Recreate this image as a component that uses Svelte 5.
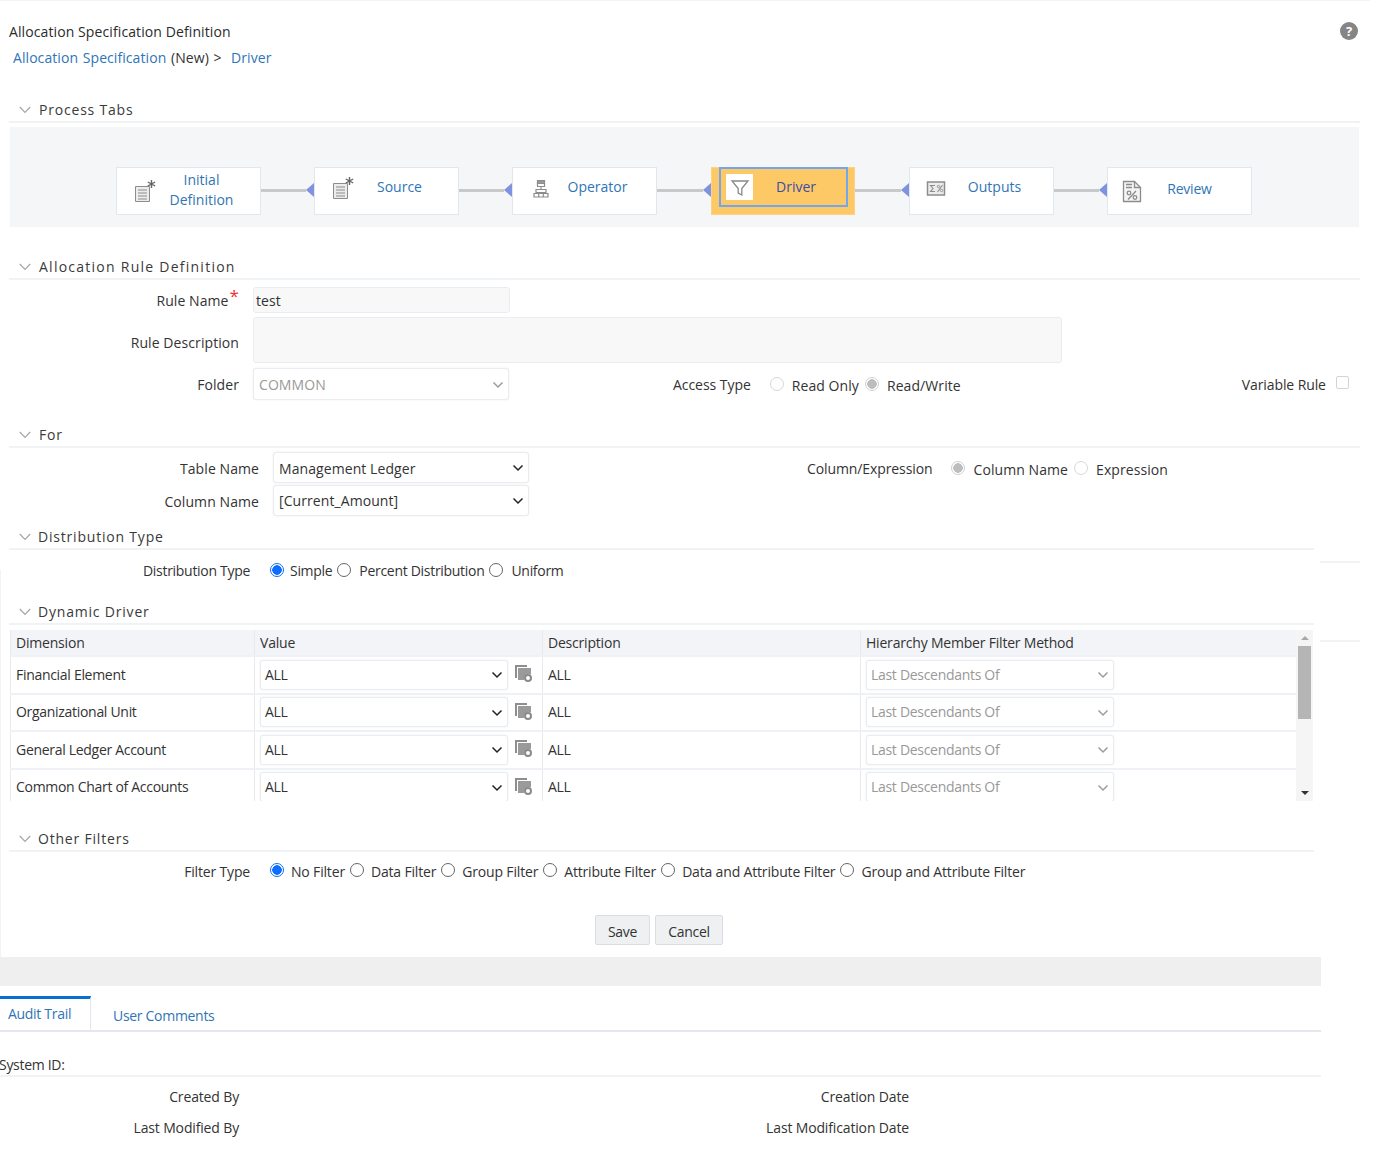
<script>
    const steps = [
        {name: 'Initial Definition', icon: 'doc', low: true},
        {name: 'Source', icon: 'doc'},
        {name: 'Operator', icon: 'org'},
        {name: 'Driver', icon: 'funnel', active: true},
        {name: 'Outputs', icon: 'sigma'},
        {name: 'Review', icon: 'pct'}
    ];
    const dims = ['Financial Element', 'Organizational Unit', 'General Ledger Account', 'Common Chart of Accounts'];
    const filters = ['No Filter', 'Data Filter', 'Group Filter', 'Attribute Filter', 'Data and Attribute Filter', 'Group and Attribute Filter'];
</script>

{#snippet chev(cls)}
    <svg class="chev {cls}" viewBox="0 0 12 8" width="12" height="8"><path d="M1.5 1.5 6 6l4.5-4.5" fill="none" stroke="currentColor" stroke-width="1.5"/></svg>
{/snippet}

{#snippet head(text, cls = '')}
    <div class="sec-head {cls}">
        <svg viewBox="0 0 12 8" width="12" height="8"><path d="M.8 1 6 6.5 11.2 1" fill="none" stroke="#a6a6a6" stroke-width="1.2"/></svg>
        <span>{text}</span>
    </div>
{/snippet}

{#snippet stepIcon(kind)}
    {#if kind === 'doc'}
        <svg viewBox="0 0 24 24" width="24" height="24" fill="none" stroke="#8c8c8c">
            <path d="M2.500 7.500h14v15h-14z" fill="#ececec"/>
            <path d="M5 11h9M5 14h9M5 17h9M5 20h9" stroke-width="1.200"/>
            <path d="M18.500 1v8M14.800 3l7.400 4M14.800 7l7.400-4" stroke="#666" stroke-width="1.400"/>
        </svg>
    {:else if kind === 'org'}
        <svg viewBox="0 0 24 24" width="24" height="24" fill="none" stroke="#8c8c8c" stroke-width="1.200">
            <path d="M8.500 4.500h7v3h-7z" fill="#999"/>
            <path d="M8.500 7.500h7v3h-7z"/>
            <path d="M12 10.500v3M7 13.500h10v3H7z"/>
            <path d="M5 17.500h4.700v3.500H5zM9.700 17.500h4.600v3.500H9.700zM14.300 17.500H19v3.500h-4.700z"/>
        </svg>
    {:else if kind === 'funnel'}
        <svg viewBox="0 0 24 24" width="24" height="24" fill="none" stroke="#888" stroke-width="1.300">
            <path d="M4 6h16l-6.200 7.500V20l-3.600-1.800v-4.700z"/>
        </svg>
    {:else if kind === 'sigma'}
        <svg viewBox="0 0 24 24" width="24" height="24" fill="none" stroke="#8c8c8c">
            <rect x="3.500" y="6" width="17" height="13" fill="#ececec" stroke-width="1.500"/>
            <path d="M11 9.500H6.500l2.500 3-2.500 3H11" stroke-width="1.100"/>
            <path d="M18.500 9 13.500 16" stroke-width="1.100"/>
            <circle cx="14.500" cy="10.500" r="1.200" stroke-width=".9"/>
            <circle cx="17.500" cy="14.500" r="1.200" stroke-width=".9"/>
        </svg>
    {:else}
        <svg viewBox="0 0 24 24" width="24" height="24" fill="none" stroke="#8c8c8c" stroke-width="1.300">
            <path d="M3.500 2.500h11l6 6v14h-17z" fill="#f4f4f4"/>
            <path d="M14.500 2.500v6h6"/>
            <path d="M6 5.500h6M6 8.500h6" stroke-width="1.500"/>
            <path d="M16 12 8 20.500"/>
            <circle cx="9" cy="14" r="1.800"/>
            <circle cx="15" cy="18.500" r="1.800"/>
        </svg>
    {/if}
{/snippet}

<div class="page">
    <div class="topline"></div>

    <div class="title-row">
        <span>Allocation Specification Definition</span>
        <span class="help">?</span>
    </div>
    <div class="crumb"><span class="link">Allocation Specification</span> (New) &gt;&nbsp; <span class="link">Driver</span></div>

    {@render head('Process Tabs', 'h-process')}
    <div class="band">
        {#each steps as s, i}
            {#if i > 0}
                <div class="conn" class:wide={s.active || steps[i - 1].active}><span class="conn-line"></span><span class="conn-arrow"></span></div>
            {/if}
            <div class="step {s.icon}" class:active={s.active} class:low={s.low}>
                <span class="step-inner">
                    <span class="step-icon">{@render stepIcon(s.icon)}</span>
                    <span class="step-label">{s.name}</span>
                </span>
            </div>
        {/each}
    </div>

    {@render head('Allocation Rule Definition', 'h-rule')}
    <div class="row pad r-name">
        <span class="lbl">Rule Name<sup>*</sup></span>
        <div class="input name">test</div>
    </div>
    <div class="row pad r-desc">
        <span class="lbl">Rule Description</span>
        <div class="input desc"></div>
    </div>
    <div class="row pad r-folder">
        <span class="lbl">Folder</span>
        <div class="sel off folder"><span>COMMON</span>{@render chev('light')}</div>
        <span class="access">Access Type</span>
        <label class="opt first"><input type="radio" class="dis" disabled name="acc"/>Read Only</label>
        <label class="opt roomy"><input type="radio" class="dis" checked disabled name="acc"/>Read/Write</label>
        <span class="var">Variable Rule</span>
        <input type="checkbox" class="cb" disabled/>
    </div>

    {@render head('For', 'h-for')}
    <div class="row pad r-table">
        <span class="lbl wide">Table Name</span>
        <div class="sel tbl"><span>Management Ledger</span>{@render chev('')}</div>
        <span class="colexp">Column/Expression</span>
        <label class="opt first"><input type="radio" class="dis" checked disabled name="ce"/>Column Name</label>
        <label class="opt roomy"><input type="radio" class="dis" disabled name="ce"/>Expression</label>
    </div>
    <div class="row pad r-col">
        <span class="lbl wide">Column Name</span>
        <div class="sel tbl"><span>[Current_Amount]</span>{@render chev('')}</div>
    </div>

    {@render head('Distribution Type', 'short h-dist')}
    <div class="row r-dist">
        <span class="lbl dist-lbl">Distribution Type</span>
        <label class="opt first"><input type="radio" name="dist" checked/>Simple</label>
        <label class="opt"><input type="radio" name="dist"/>Percent Distribution</label>
        <label class="opt"><input type="radio" name="dist"/>Uniform</label>
        <span class="stub dist-stub"></span>
    </div>

    {@render head('Dynamic Driver', 'short h-dyn')}
    <div class="grid-wrap">
        <div class="grid">
            <table>
                <colgroup><col class="c1"/><col class="c2"/><col class="c3"/><col class="c4"/></colgroup>
                <thead>
                    <tr><th>Dimension</th><th>Value</th><th>Description</th><th>Hierarchy Member Filter Method</th></tr>
                </thead>
                <tbody>
                    {#each dims as d}
                        <tr>
                            <td>{d}</td>
                            <td>
                                <div class="val">
                                    <div class="sel cell"><span>ALL</span>{@render chev('')}</div>
                                    <svg class="stack" viewBox="0 0 18 18" width="18" height="18">
                                        <path d="M1 1h12v2H3v11H1z" fill="#8e8e8e"/>
                                        <path d="M4 4h13v6.500a5 5 0 0 0-7 5.500H4z" fill="#9a9a9a"/>
                                        <circle cx="14" cy="14" r="3" fill="none" stroke="#8a8a8a" stroke-width="2"/>
                                    </svg>
                                </div>
                            </td>
                            <td>ALL</td>
                            <td><div class="sel off cell"><span>Last Descendants Of</span>{@render chev('light')}</div></td>
                        </tr>
                    {/each}
                </tbody>
            </table>
        </div>
        <div class="scroll">
            <span class="arr up"></span>
            <span class="thumb"></span>
            <span class="arr down"></span>
        </div>
        <span class="stub grid-stub"></span>
    </div>

    {@render head('Other Filters', 'short h-other')}
    <div class="row r-filter">
        <span class="lbl dist-lbl">Filter Type</span>
        {#each filters as f, i}
            <label class="opt" class:first={i === 0}><input type="radio" name="flt" checked={i === 0}/>{f}</label>
        {/each}
    </div>

    <div class="buttons">
        <button class="save">Save</button>
        <button class="cancel">Cancel</button>
    </div>

    <div class="graybar"></div>

    <div class="tabs">
        <span class="tab on">Audit Trail</span>
        <span class="tab">User Comments</span>
    </div>

    <div class="sysid">System ID:</div>
    <div class="audit a1"><span class="alb">Created By</span><span class="alb right">Creation Date</span></div>
    <div class="audit a2"><span class="alb">Last Modified By</span><span class="alb right">Last Modification Date</span></div>
</div>

<style>
    :global(body) {
        margin: 0;
        background: #fff;
    }

    .page {
        width: 1387px;
        height: 1150px;
        overflow: hidden;
        font-family: "Open Sans", "Noto Sans", sans-serif;
        font-size: 14px;
        letter-spacing: -0.3px;
        color: #333;
        line-height: 24px;
        background: linear-gradient(#f3f3f3, #f3f3f3) 0 570px / 1px 387px no-repeat;
    }

    .topline {
        width: 1370px;
        height: 1px;
        background: #f3f4f5;
    }

    .title-row {
        display: flex;
        justify-content: space-between;
        width: 1349px;
        height: 24px;
        margin-top: 19px;
        padding-left: 9px;
        color: #2b2b2b;
        letter-spacing: 0.1px;
    }

    .help {
        width: 18px;
        height: 18px;
        margin-top: 2px;
        border-radius: 50%;
        background: #858585;
        color: #fff;
        font-size: 13px;
        font-weight: 700;
        line-height: 18px;
        text-align: center;
        letter-spacing: 0;
    }

    .crumb {
        height: 24px;
        margin-top: 2px;
        padding-left: 13px;
        letter-spacing: 0.07px;
        word-spacing: 1px;
    }

    .link {
        color: #2f75b5;
    }

    .sec-head {
        display: flex;
        align-items: center;
        box-sizing: border-box;
        width: 1351px;
        height: 25px;
        margin-left: 9px;
        padding-left: 10px;
        padding-top: 1px;
        border-bottom: 2px solid #f0f3f6;
        letter-spacing: 0.8px;
        color: #3a3a3a;
    }

    .sec-head svg {
        margin-right: 8px;
    }

    .sec-head.short {
        width: 1305px;
    }

    .sec-head.short svg {
        margin-right: 7px;
    }

    .h-process { margin-top: 28px; }
    .h-rule { margin-top: 28px; letter-spacing: 1.25px; }
    .h-for { margin-top: 23px; }
    .h-dist { margin-top: 9px; }
    .h-dyn { margin-top: 17px; }
    .h-other { margin-top: 26px; }

    .band {
        display: flex;
        box-sizing: border-box;
        width: 1349px;
        height: 100px;
        margin: 4px 0 0 10px;
        padding: 40px 0 0 106px;
        background: #f5f6f7;
        letter-spacing: 0;
    }

    .step {
        display: flex;
        box-sizing: border-box;
        width: 145px;
        height: 48px;
        background: #fff;
        border: 1px solid #e1e7ee;
    }

    .step-inner {
        display: flex;
        align-items: center;
        height: 38px;
        box-sizing: border-box;
    }

    .step.low .step-inner {
        height: 44px;
    }

    .step.pct .step-inner {
        height: 42px;
    }

    .step-icon {
        display: flex;
        flex: none;
        width: 30px;
        margin-top: 2px;
        padding-left: 16px;
    }

    .step.sigma .step-icon {
        width: 32px;
        padding-left: 14px;
    }

    .step.pct .step-icon {
        width: 34px;
        margin-top: 4px;
        padding-left: 12px;
    }

    .step-label {
        width: 77px;
        line-height: 20px;
        text-align: center;
        color: #2f75b5;
    }

    .step.pct .step-label {
        margin-left: -3px;
        letter-spacing: -0.2px;
    }

    .step.active {
        width: 144px;
        background: #fdc966;
        border-color: #fdd285;
        padding-left: 7px;
    }

    .step.active .step-inner {
        box-sizing: border-box;
        width: 129px;
        height: 40px;
        margin-top: -1px;
        border: 2px solid #74a6f0;
    }

    .step.active .step-icon {
        justify-content: center;
        align-items: center;
        width: 27px;
        height: 26px;
        padding: 0;
        margin: 0 0 0 5px;
        background: #fff;
    }

    .step.active .step-label {
        width: 84px;
        margin-left: 1px;
        color: #3d4ea5;
    }

    .conn {
        display: flex;
        align-items: center;
        width: 53px;
        height: 46px;
    }

    .conn.wide {
        width: 54px;
    }

    .conn-line {
        flex: 1;
        height: 3px;
        background: #c9c9c9;
    }

    .conn-arrow {
        width: 0;
        height: 0;
        border-top: 7px solid transparent;
        border-bottom: 7px solid transparent;
        border-right: 8px solid #7e92e0;
    }

    .row {
        display: flex;
        align-items: center;
    }

    .pad {
        letter-spacing: 0.08px;
    }

    .pad > span, .pad > .opt {
        padding-top: 2px;
    }

    .pad > .opt {
        padding-top: 4px;
    }

    .r-desc .lbl {
        padding-top: 6px;
    }

    .lbl {
        flex: none;
        box-sizing: border-box;
        width: 239px;
        margin-right: 14px;
        text-align: right;
    }

    .lbl.wide {
        width: 259px;
    }

    .lbl.dist-lbl {
        width: 250px;
        margin-right: 1px;
    }

    .lbl sup {
        color: #e8343a;
        font-size: 17px;
        line-height: 0;
        vertical-align: 4px;
        margin-left: 1px;
    }

    .input, .sel {
        box-sizing: border-box;
        border: 1px solid #e9ecf0;
        border-radius: 3px;
    }

    .input {
        background: #f8f8f8;
    }

    .input.name {
        width: 257px;
        height: 26px;
        padding-left: 2px;
        line-height: 26px;
    }

    .input.desc {
        width: 809px;
        height: 46px;
    }

    .r-name { margin-top: 7px; }
    .r-desc { margin-top: 4px; }
    .r-folder { margin-top: 5px; }
    .r-table { margin-top: 4px; }
    .r-col { margin-top: 2px; }
    .r-dist { margin-top: 9px; height: 24px; }
    .r-filter { margin-top: 8px; height: 24px; letter-spacing: -0.17px; }

    .sel {
        display: flex;
        align-items: center;
        justify-content: space-between;
        padding: 0 4px 0 5px;
        background: #fff;
        color: #333;
        box-shadow: 0 0 2px rgba(0, 0, 0, 0.08);
    }

    .sel.off {
        color: #999;
    }

    .folder {
        width: 256px;
        height: 32px;
        padding-top: 1px;
    }

    .tbl {
        width: 256px;
        height: 31px;
    }

    .r-table .tbl {
        padding-top: 2px;
    }

    .chev {
        flex: none;
        color: #222;
        margin-top: 1px;
    }

    .r-table .chev {
        margin-top: -1px;
    }

    .chev.light {
        color: #9c9c9c;
    }

    .access {
        margin-left: 164px;
        letter-spacing: -0.05px;
    }

    .colexp {
        margin-left: 278px;
        letter-spacing: -0.1px;
    }

    .opt {
        display: inline-flex;
        align-items: center;
        margin-left: 5px;
    }

    .opt.roomy {
        margin-left: 6px;
    }

    .opt.first {
        margin-left: 19px;
    }

    .opt input {
        appearance: none;
        flex: none;
        box-sizing: border-box;
        width: 14px;
        height: 14px;
        margin: -4px 7px 0 0;
        border: 1px solid #666;
        border-radius: 50%;
        background: #fff;
    }

    .pad .opt input {
        margin-right: 8px;
    }

    .r-dist .opt input {
        margin: -2px 8px 0 0;
    }

    .r-dist .opt.first input {
        margin-right: 6px;
    }

    .opt input:checked {
        border: 1px solid #0d6efd;
        background: radial-gradient(circle, #0d6efd 0 4.500px, #fff 5px);
    }

    .opt input.dis {
        border-color: #d8d8d8;
    }

    .opt input.dis:checked {
        border-color: #cfcfcf;
        background: radial-gradient(circle, #bdbdbd 0 4.500px, #fff 5px);
    }

    .var {
        margin-left: 281px;
        letter-spacing: -0.1px;
    }

    .cb {
        appearance: none;
        box-sizing: border-box;
        width: 13px;
        height: 13px;
        margin: -4px 0 0 10px;
        border: 1px solid #d4d4d4;
        border-radius: 2px;
        background: #fff;
    }

    .stub {
        width: 40px;
        height: 2px;
        background: #f0f3f6;
    }

    .dist-stub {
        margin: -18px 27px 0 auto;
    }

    .grid-wrap {
        display: flex;
        width: 1350px;
        height: 171px;
        margin: 5px 0 0 10px;
    }

    .grid-stub {
        margin: 10px 0 0 7px;
    }

    .grid {
        flex: none;
        width: 1286px;
        height: 171px;
        overflow: hidden;
    }

    table {
        width: 1286px;
        table-layout: fixed;
        border-collapse: collapse;
    }

    .c1 { width: 244px; }
    .c2 { width: 288px; }
    .c3 { width: 318px; }
    .c4 { width: 436px; }

    th, td {
        box-sizing: border-box;
        padding: 0 5px;
        text-align: left;
        font-weight: 400;
        border-left: 1px solid #e6eaef;
        border-bottom: 2px solid #eef1f5;
    }

    th {
        height: 26px;
        background: #f2f4f8;
        letter-spacing: -0.2px;
    }

    td {
        height: 37.500px;
    }

    .val {
        display: flex;
        align-items: center;
    }

    .cell {
        width: 248px;
        height: 30px;
        padding-left: 4px;
    }

    .stack {
        flex: none;
        margin: -3px 0 0 6px;
    }

    .scroll {
        display: flex;
        flex-direction: column;
        align-items: center;
        flex: none;
        box-sizing: border-box;
        width: 17px;
        height: 171px;
        padding-top: 6px;
        background: #f5f5f5;
    }

    .arr {
        width: 0;
        height: 0;
        border-left: 4px solid transparent;
        border-right: 4px solid transparent;
    }

    .arr.up {
        border-bottom: 4px solid #a8a8a8;
    }

    .arr.down {
        margin-top: auto;
        margin-bottom: 6px;
        border-top: 4px solid #333;
    }

    .thumb {
        width: 13px;
        height: 73px;
        margin-top: 6px;
        background: #b5b5b5;
    }

    .buttons {
        display: flex;
        gap: 5px;
        margin: 31px 0 0 595px;
    }

    button {
        box-sizing: border-box;
        height: 30px;
        padding: 3px 0 0;
        border: 1px solid #dadee3;
        border-radius: 2px;
        background: #eef0f2;
        color: #333;
        font: inherit;
        letter-spacing: inherit;
    }

    .save { width: 55px; }
    .cancel { width: 68px; }

    .graybar {
        width: 1321px;
        height: 29px;
        margin-top: 12px;
        background: #efefef;
    }

    .tabs {
        display: flex;
        box-sizing: border-box;
        width: 1321px;
        height: 36px;
        margin-top: 10px;
        border-bottom: 2px solid #e4e8ee;
    }

    .tab {
        padding: 8px 0 0 22px;
        color: #2f75b5;
    }

    .tab.on {
        box-sizing: border-box;
        width: 91px;
        height: 34px;
        padding: 3px 0 0 8px;
        border-top: 3px solid #0a6ed1;
        border-right: 1px solid #e0e6ed;
    }

    .sysid {
        box-sizing: border-box;
        width: 1321px;
        height: 25px;
        margin-top: 20px;
        padding-top: 1px;
        border-bottom: 2px solid #f0f3f6;
        text-indent: -1px;
    }

    .audit {
        display: flex;
        height: 24px;
        letter-spacing: -0.15px;
    }

    .a1 { margin-top: 8px; }
    .a2 { margin-top: 7px; }

    .alb {
        width: 239px;
        text-align: right;
    }

    .alb.right {
        width: 670px;
    }
</style>
